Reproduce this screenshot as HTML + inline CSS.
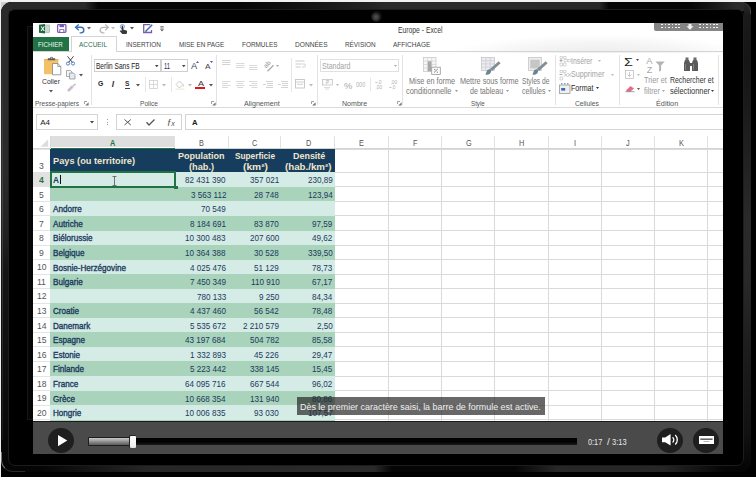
<!DOCTYPE html><html><head><meta charset="utf-8"><style>
*{margin:0;padding:0;box-sizing:border-box}
html,body{width:756px;height:477px;overflow:hidden;background:#000;position:relative;font-family:"Liberation Sans",sans-serif}
.a{position:absolute}
.t{position:absolute;white-space:nowrap;line-height:1;transform-origin:0 0}
svg{position:absolute;overflow:visible}
</style></head><body>
<div class="a" style="left:0;top:0;width:756px;height:2px;background:#f2f2f2"></div>
<div class="a" style="left:0;top:0;width:1px;height:477px;background:#eeeeee"></div>
<div class="a" style="left:1px;top:2px;width:8px;height:10px;background:#d0d0d0"></div>
<div class="a" style="left:1px;top:2px;width:750px;height:470px;border-radius:11px;overflow:hidden;background:#050505">
<div class="a" style="left:0;top:0;width:750px;height:9px;background:linear-gradient(to right,#2b2b2b 0px,#292929 84px,#060606 97px,#060606 240px,#151515 310px,#242424 370px,#2a2a2a 385px,#292929 598px,#060606 608px,#060606 690px,#1e1e1e 722px,#2a2a2a 735px)"></div>
<div class="a" style="left:0;top:0;width:8px;height:470px;background:linear-gradient(to bottom,#2b2b2b 0px,#2a2a2a 168px,#222 228px,#141414 270px,#0c0c0c 400px,#050505 460px)"></div>
<div class="a" style="left:743px;top:0;width:8px;height:470px;background:linear-gradient(to bottom,#2a2a2a 0px,#1a1a1a 14px,#151515 60px,#202020 150px,#2a2a2a 220px,#282828 280px,#1c1c1c 350px,#121212 430px,#050505 465px)"></div>
<div class="a" style="left:39px;top:463.5px;width:352px;height:6.5px;background:linear-gradient(to right,rgba(40,40,40,0),#262626 30%,#2a2a2a 95%,rgba(42,42,42,0))"></div>
<div class="a" style="left:514px;top:463.5px;width:210px;height:6.5px;background:linear-gradient(to right,rgba(40,40,40,0),#272727 20%,#262626 70%,rgba(38,38,38,0))"></div>
</div>
<div class="a" style="left:2px;top:40px;width:1px;height:400px;background:linear-gradient(to bottom,#2e2e2e,#444 40%,#1a1a1a)"></div>
<div class="a" style="left:8px;top:8.7px;width:736px;height:457px;border-radius:7px;background:#000;border:1px solid #1c1c1c"></div>
<div class="a" style="left:1px;top:452px;width:24px;height:20px;border-bottom-left-radius:12px;border-left:1px solid #777;border-bottom:1px solid #2a2a2a"></div>
<div class="a" style="left:371px;top:11px;width:11px;height:11px;border-radius:50%;background:radial-gradient(circle at 45% 55%,#555 0,#333 35%,#0a0a0a 60%,#1c1c1c 80%,#000 100%)"></div>
<div class="a" style="left:27px;top:26px;width:6px;height:393.5px;background:#060608;border:0.6px solid #161616;border-right:none"></div>
<div class="a" style="left:741px;top:2px;width:10px;height:12px;border-top-right-radius:9px;border-top:1px solid #3a3a3a;border-right:1px solid #444"></div>
<div class="a" style="left:33px;top:23px;width:690px;height:431px;background:#fff;overflow:hidden">
<div class="a" style="left:380.00px;top:0.00px;width:310.00px;height:30.00px;background:radial-gradient(ellipse 60% 90% at 60% 110%,#ebebeb 0,#f4f4f4 45%,#fff 80%)"></div>
<div class="t" style="left:364.80px;top:2.52px;font-size:8.6px;color:#3a3a3a;font-weight:400;;transform:scaleX(0.7894)">Europe - Excel</div>
<div class="a" style="left:621.30px;top:0.00px;width:69.00px;height:7.50px;background:#858585;border-bottom-left-radius:2px"></div>
<div class="a" style="left:628.20px;top:0.50px;width:1.70px;height:1.70px;background:#f4f4f4"></div>
<div class="a" style="left:631.65px;top:0.50px;width:1.70px;height:1.70px;background:#f4f4f4"></div>
<div class="a" style="left:635.10px;top:0.50px;width:1.70px;height:1.70px;background:#f4f4f4"></div>
<div class="a" style="left:638.55px;top:0.50px;width:1.70px;height:1.70px;background:#f4f4f4"></div>
<div class="a" style="left:642.00px;top:0.50px;width:1.70px;height:1.70px;background:#f4f4f4"></div>
<div class="a" style="left:645.45px;top:0.50px;width:1.70px;height:1.70px;background:#f4f4f4"></div>
<div class="a" style="left:666.20px;top:0.50px;width:1.70px;height:1.70px;background:#f4f4f4"></div>
<div class="a" style="left:669.65px;top:0.50px;width:1.70px;height:1.70px;background:#f4f4f4"></div>
<div class="a" style="left:673.10px;top:0.50px;width:1.70px;height:1.70px;background:#f4f4f4"></div>
<div class="a" style="left:676.55px;top:0.50px;width:1.70px;height:1.70px;background:#f4f4f4"></div>
<div class="a" style="left:680.00px;top:0.50px;width:1.70px;height:1.70px;background:#f4f4f4"></div>
<div class="a" style="left:683.45px;top:0.50px;width:1.70px;height:1.70px;background:#f4f4f4"></div>
<div class="a" style="left:628.20px;top:3.60px;width:1.70px;height:1.70px;background:#f4f4f4"></div>
<div class="a" style="left:631.65px;top:3.60px;width:1.70px;height:1.70px;background:#f4f4f4"></div>
<div class="a" style="left:635.10px;top:3.60px;width:1.70px;height:1.70px;background:#f4f4f4"></div>
<div class="a" style="left:638.55px;top:3.60px;width:1.70px;height:1.70px;background:#f4f4f4"></div>
<div class="a" style="left:642.00px;top:3.60px;width:1.70px;height:1.70px;background:#f4f4f4"></div>
<div class="a" style="left:645.45px;top:3.60px;width:1.70px;height:1.70px;background:#f4f4f4"></div>
<div class="a" style="left:666.20px;top:3.60px;width:1.70px;height:1.70px;background:#f4f4f4"></div>
<div class="a" style="left:669.65px;top:3.60px;width:1.70px;height:1.70px;background:#f4f4f4"></div>
<div class="a" style="left:673.10px;top:3.60px;width:1.70px;height:1.70px;background:#f4f4f4"></div>
<div class="a" style="left:676.55px;top:3.60px;width:1.70px;height:1.70px;background:#f4f4f4"></div>
<div class="a" style="left:680.00px;top:3.60px;width:1.70px;height:1.70px;background:#f4f4f4"></div>
<div class="a" style="left:683.45px;top:3.60px;width:1.70px;height:1.70px;background:#f4f4f4"></div>
<svg style="left:653.00px;top:0.00px;" width="8" height="8" viewBox="0 0 8 8"><path d="M2.5 1h3v2.2h2L4 6.8 0.5 3.2h2z" fill="#f2f2f2"/></svg>
<svg style="left:6.00px;top:0.70px;" width="11" height="9.5" viewBox="0 0 11 9.5"><rect x="4.5" y="1" width="6" height="7.5" fill="#c9d9cf" stroke="#8fb19c" stroke-width="0.6"/><path d="M0 0.8 6 0v9.5L0 8.7z" fill="#1d6c40"/><path d="M1.6 2.6h1.2l0.9 1.5 0.9-1.5h1.2L4.3 4.8l1.5 2.3H4.6l-0.9-1.5-0.9 1.5H1.6l1.5-2.3z" fill="#fff"/></svg>
<svg style="left:24.00px;top:1.00px;" width="9.5" height="9" viewBox="0 0 9.5 9"><rect x="0.6" y="0.6" width="8.3" height="7.8" rx="0.8" fill="none" stroke="#7a5cb4" stroke-width="1.3"/><rect x="2.5" y="0.6" width="4.5" height="2.6" fill="#7a5cb4"/><rect x="2.3" y="5.2" width="5" height="3.2" fill="#7a5cb4"/><rect x="3.3" y="6" width="3" height="2" fill="#fff"/></svg>
<svg style="left:41.50px;top:1.00px;" width="10" height="9" viewBox="0 0 10 9"><path d="M1.2 3.3h4.8a2.8 2.8 0 0 1 0 5.6H4.6" fill="none" stroke="#3b6db3" stroke-width="1.4"/><path d="M3.8 0.4 0.6 3.3l3.2 2.9" fill="none" stroke="#3b6db3" stroke-width="1.4"/></svg>
<svg style="left:53.50px;top:4.00px;" width="4" height="3" viewBox="0 0 4 3"><path d="M0 0h4L2 2.5z" fill="#666"/></svg>
<svg style="left:65.50px;top:1.00px;" width="10" height="9" viewBox="0 0 10 9"><path d="M8.8 3.3H4a2.8 2.8 0 0 0 0 5.6h1.4" fill="none" stroke="#b9b9b9" stroke-width="1.3"/><path d="M6.2 0.4l3.2 2.9-3.2 2.9" fill="none" stroke="#b9b9b9" stroke-width="1.3"/></svg>
<svg style="left:78.00px;top:4.00px;" width="4" height="3" viewBox="0 0 4 3"><path d="M0 0h4L2 2.5z" fill="#bbb"/></svg>
<svg style="left:86.00px;top:0.50px;" width="9" height="10" viewBox="0 0 9 10"><circle cx="3.4" cy="2.6" r="2.1" fill="none" stroke="#5a8fd0" stroke-width="0.8"/><path d="M2.6 2.4a0.8 0.8 0 0 1 1.6 0v3.2l3.2 0.9c0.6 0.2 0.8 0.6 0.7 1.2L7.6 10H3.3L0.9 7.3c-0.3-0.4 0-1 0.6-0.9l1.1 0.4z" fill="#3a3a3a"/></svg>
<svg style="left:97.00px;top:4.00px;" width="4" height="3" viewBox="0 0 4 3"><path d="M0 0h4L2 2.5z" fill="#555"/></svg>
<svg style="left:110.00px;top:1.00px;" width="10" height="9.5" viewBox="0 0 10 9.5"><path d="M7.3 0.7H0.7v7.8h7.8V6" fill="none" stroke="#7a5cb4" stroke-width="1.3"/><path d="M3 7 9.2 0.8" stroke="#3f6fb8" stroke-width="1.5"/><path d="M2.2 7.9l0.6-1.6 1 1z" fill="#333"/></svg>
<svg style="left:126.50px;top:3.00px;" width="4" height="6" viewBox="0 0 4 6"><path d="M0.3 0.6h3.4M0.3 2h3.4" stroke="#666" stroke-width="0.8"/><path d="M0 3.3h4L2 5.5z" fill="#666"/></svg>
<div class="a" style="left:0.00px;top:13.80px;width:36.00px;height:14.80px;background:#217346"></div>
<div class="a" style="left:38.30px;top:13.20px;width:45.30px;height:16.00px;background:#fff;border:1px solid #d4d4d4;border-bottom:none"></div>
<div class="a" style="left:0.00px;top:28.40px;width:38.30px;height:1.00px;background:#d4d4d4"></div>
<div class="a" style="left:83.60px;top:28.40px;width:606.40px;height:1.00px;background:#d4d4d4"></div>
<div class="t" style="left:5.20px;top:18.33px;font-size:8.0px;color:#f3f7f5;font-weight:400;;transform:scaleX(0.7750)">FICHIER</div>
<div class="t" style="left:46.20px;top:18.33px;font-size:8.0px;color:#2f6e56;font-weight:400;;transform:scaleX(0.8072)">ACCUEIL</div>
<div class="t" style="left:92.60px;top:18.33px;font-size:8.0px;color:#444;font-weight:400;;transform:scaleX(0.8037)">INSERTION</div>
<div class="t" style="left:145.70px;top:18.33px;font-size:8.0px;color:#444;font-weight:400;;transform:scaleX(0.7980)">MISE EN PAGE</div>
<div class="t" style="left:209.00px;top:18.33px;font-size:8.0px;color:#444;font-weight:400;;transform:scaleX(0.8008)">FORMULES</div>
<div class="t" style="left:262.30px;top:18.33px;font-size:8.0px;color:#444;font-weight:400;;transform:scaleX(0.8240)">DONNÉES</div>
<div class="t" style="left:311.50px;top:18.33px;font-size:8.0px;color:#444;font-weight:400;;transform:scaleX(0.7977)">RÉVISION</div>
<div class="t" style="left:359.70px;top:18.33px;font-size:8.0px;color:#444;font-weight:400;;transform:scaleX(0.8147)">AFFICHAGE</div>
<div class="a" style="left:0.00px;top:84.00px;width:690.00px;height:1.00px;background:#dadada"></div>
<div class="a" style="left:58.30px;top:32.00px;width:1.00px;height:50.00px;background:#e3e3e3"></div>
<div class="a" style="left:182.80px;top:32.00px;width:1.00px;height:50.00px;background:#e3e3e3"></div>
<div class="a" style="left:284.00px;top:32.00px;width:1.00px;height:50.00px;background:#e3e3e3"></div>
<div class="a" style="left:368.80px;top:32.00px;width:1.00px;height:50.00px;background:#e3e3e3"></div>
<div class="a" style="left:521.50px;top:32.00px;width:1.00px;height:50.00px;background:#e3e3e3"></div>
<div class="a" style="left:586.00px;top:32.00px;width:1.00px;height:50.00px;background:#e3e3e3"></div>
<div class="a" style="left:684.80px;top:32.00px;width:1.00px;height:50.00px;background:#e3e3e3"></div>
<div class="t" style="left:2.10px;top:76.64px;font-size:7.4px;color:#555;font-weight:400;;transform:scaleX(0.8853)">Presse-papiers</div>
<div class="t" style="left:107.30px;top:76.64px;font-size:7.4px;color:#555;font-weight:400;;transform:scaleX(0.8937)">Police</div>
<div class="t" style="left:211.40px;top:76.64px;font-size:7.4px;color:#555;font-weight:400;;transform:scaleX(0.9653)">Alignement</div>
<div class="t" style="left:309.30px;top:76.64px;font-size:7.4px;color:#555;font-weight:400;;transform:scaleX(0.9545)">Nombre</div>
<div class="t" style="left:437.90px;top:76.64px;font-size:7.4px;color:#555;font-weight:400;;transform:scaleX(0.8395)">Style</div>
<div class="t" style="left:541.50px;top:76.64px;font-size:7.4px;color:#555;font-weight:400;;transform:scaleX(0.9051)">Cellules</div>
<div class="t" style="left:623.40px;top:76.64px;font-size:7.4px;color:#555;font-weight:400;;transform:scaleX(0.9819)">Édition</div>
<svg style="left:51.40px;top:78.20px;" width="5" height="5" viewBox="0 0 5 5"><path d="M0.5 0.5h2.5M0.5 0.5v2.5" stroke="#888" stroke-width="0.8" fill="none"/><path d="M4.6 1.2v3.4H1.2z" fill="#777"/></svg>
<svg style="left:177.50px;top:78.20px;" width="5" height="5" viewBox="0 0 5 5"><path d="M0.5 0.5h2.5M0.5 0.5v2.5" stroke="#888" stroke-width="0.8" fill="none"/><path d="M4.6 1.2v3.4H1.2z" fill="#777"/></svg>
<svg style="left:278.00px;top:78.20px;" width="5" height="5" viewBox="0 0 5 5"><path d="M0.5 0.5h2.5M0.5 0.5v2.5" stroke="#888" stroke-width="0.8" fill="none"/><path d="M4.6 1.2v3.4H1.2z" fill="#777"/></svg>
<svg style="left:364.00px;top:78.20px;" width="5" height="5" viewBox="0 0 5 5"><path d="M0.5 0.5h2.5M0.5 0.5v2.5" stroke="#888" stroke-width="0.8" fill="none"/><path d="M4.6 1.2v3.4H1.2z" fill="#777"/></svg>
<svg style="left:11.00px;top:32.50px;" width="18" height="20" viewBox="0 0 18 20"><rect x="0" y="3" width="14.3" height="15.2" fill="#f3c168"/><rect x="0" y="3" width="14.3" height="1.2" fill="#e8b050"/><path d="M3.8 4.2V2.2h2.2a1.5 1.5 0 0 1 3 0h2.2v2z" fill="#5d5d5d"/><circle cx="7.5" cy="2" r="0.6" fill="#fff"/><path d="M8.5 7.5h5.3l3 3v8.3H8.5z" fill="#fff" stroke="#7a7a7a" stroke-width="0.7"/><path d="M13.8 7.5v3h3" fill="none" stroke="#7a7a7a" stroke-width="0.7"/></svg>
<div class="t" style="left:9.20px;top:55.11px;font-size:7.9px;color:#333;font-weight:400;;transform:scaleX(0.8734)">Coller</div>
<svg style="left:16.30px;top:67.00px;" width="4" height="3" viewBox="0 0 4 3"><path d="M0 0h4L2 2.5z" fill="#555"/></svg>
<svg style="left:33.00px;top:32.50px;" width="9" height="9.5" viewBox="0 0 9 9.5"><path d="M1.5 0.3 6.5 6.5M7.5 0.3 2.5 6.5" stroke="#333" stroke-width="0.9"/><circle cx="2" cy="7.5" r="1.6" fill="none" stroke="#3f78c0" stroke-width="0.9"/><circle cx="7" cy="7.5" r="1.6" fill="none" stroke="#3f78c0" stroke-width="0.9"/></svg>
<svg style="left:33.00px;top:47.00px;" width="10" height="9.5" viewBox="0 0 10 9.5"><path d="M0.5 0.5h4l1.5 1.5v4.5H0.5z" fill="#f4f4f4" stroke="#8a8a8a" stroke-width="0.7"/><path d="M3.5 3h4l1.5 1.5v4.5H3.5z" fill="#e4e8f0" stroke="#8a8a8a" stroke-width="0.7"/></svg>
<svg style="left:46.00px;top:50.50px;" width="4" height="3" viewBox="0 0 4 3"><path d="M0 0h4L2 2.5z" fill="#555"/></svg>
<svg style="left:34.00px;top:60.50px;" width="10" height="8" viewBox="0 0 10 8"><path d="M1 7 5.5 2.5" stroke="#c8b8d8" stroke-width="2.5"/><path d="M5.5 2.5 8.5 0" stroke="#bbb" stroke-width="1.5"/><path d="M2 7.5 6 3.5" stroke="#e8d2b0" stroke-width="1"/></svg>
<div class="a" style="left:61.30px;top:35.60px;width:67.10px;height:13.80px;background:#fff;border:1px solid #cfcfcf"></div>
<div class="a" style="left:128.10px;top:35.60px;width:26.60px;height:13.80px;background:#fff;border:1px solid #cfcfcf"></div>
<div class="t" style="left:63.20px;top:39.22px;font-size:8.6px;color:#222;font-weight:400;;transform:scaleX(0.7623)">Berlin Sans FB</div>
<svg style="left:122.00px;top:41.80px;" width="3.5" height="2.5" viewBox="0 0 3.5 2.5"><path d="M0 0h3.5L1.75 2.2z" fill="#444"/></svg>
<div class="t" style="left:131.00px;top:39.22px;font-size:8.6px;color:#2a2a5a;font-weight:400;;transform:scaleX(0.6725)">11</div>
<svg style="left:149.00px;top:41.80px;" width="3.5" height="2.5" viewBox="0 0 3.5 2.5"><path d="M0 0h3.5L1.75 2.2z" fill="#444"/></svg>
<div class="t" style="left:157.80px;top:39.28px;font-size:9px;color:#444;font-weight:400;;transform:scaleX(1.0306)">A</div>
<svg style="left:163.20px;top:37.80px;" width="3" height="2" viewBox="0 0 3 2"><path d="M0 2 1.5 0 3 2z" fill="#4a5aa0"/></svg>
<div class="t" style="left:172.00px;top:40.23px;font-size:8px;color:#444;font-weight:400;;transform:scaleX(1.0292)">A</div>
<svg style="left:176.80px;top:37.80px;" width="3" height="2" viewBox="0 0 3 2"><path d="M0 0h3L1.5 2z" fill="#4a5aa0"/></svg>
<div class="t" style="left:65.20px;top:57.43px;font-size:8px;color:#222;font-weight:700;;transform:scaleX(0.8501)">G</div>
<div class="t" style="left:78.80px;top:57.29px;font-size:8.4px;color:#333;font-weight:700;font-style:italic;font-family:"Liberation Serif",serif;transform:scaleX(1.3780)">I</div>
<div class="t" style="left:92.40px;top:57.40px;font-size:7.8px;color:#333;font-weight:700;;transform:scaleX(0.8456)">S</div>
<div class="a" style="left:92.00px;top:64.60px;width:5.30px;height:0.90px;background:#444"></div>
<svg style="left:102.50px;top:60.50px;" width="4" height="3" viewBox="0 0 4 3"><path d="M0 0h4L2 2.5z" fill="#555"/></svg>
<div class="a" style="left:112.00px;top:54.00px;width:1.00px;height:15.00px;background:#e6e6e6"></div>
<svg style="left:116.00px;top:57.00px;" width="9" height="9" viewBox="0 0 9 9"><rect x="0.5" y="0.5" width="8" height="8" fill="none" stroke="#cfcfcf" stroke-width="0.8"/><path d="M4.5 0.5v8M0.5 4.5h8" stroke="#cfcfcf" stroke-width="0.8"/></svg>
<svg style="left:129.00px;top:60.50px;" width="4" height="3" viewBox="0 0 4 3"><path d="M0 0h4L2 2.5z" fill="#bbb"/></svg>
<div class="a" style="left:137.50px;top:54.00px;width:1.00px;height:15.00px;background:#e6e6e6"></div>
<svg style="left:142.00px;top:56.50px;" width="10" height="9.5" viewBox="0 0 10 9.5"><path d="M1 4.5 4.5 1 8 4.5 4.5 8z" fill="none" stroke="#c4c4c4" stroke-width="0.9"/><path d="M8 4.5c0.5 1 1 1.6 0.6 2.2" stroke="#d0c0a0" stroke-width="0.8" fill="none"/><rect x="0.5" y="8.6" width="9" height="1" fill="#ece7d2"/></svg>
<svg style="left:155.00px;top:60.50px;" width="4" height="3" viewBox="0 0 4 3"><path d="M0 0h4L2 2.5z" fill="#bbb"/></svg>
<div class="t" style="left:164.60px;top:57.03px;font-size:8px;color:#333;font-weight:400;;transform:scaleX(1.1228)">A</div>
<div class="a" style="left:162.30px;top:63.60px;width:9.80px;height:2.20px;background:#e0161b"></div>
<svg style="left:175.50px;top:60.50px;" width="4" height="3" viewBox="0 0 4 3"><path d="M0 0h4L2 2.5z" fill="#555"/></svg>
<svg style="left:189.00px;top:37.00px;" width="12" height="10" viewBox="0 0 12 10"><rect x="0" y="0" width="8.5" height="0.9" fill="#d0d0d0"/><rect x="0" y="2" width="8.5" height="0.9" fill="#d0d0d0"/><rect x="0" y="4" width="8.5" height="0.9" fill="#d0d0d0"/></svg>
<svg style="left:202.50px;top:39.50px;" width="12" height="10" viewBox="0 0 12 10"><rect x="0" y="0" width="8.5" height="0.9" fill="#d6d6d6"/><rect x="0" y="2" width="8.5" height="0.9" fill="#d6d6d6"/><rect x="0" y="4" width="8.5" height="0.9" fill="#d6d6d6"/></svg>
<svg style="left:216.00px;top:42.00px;" width="12" height="10" viewBox="0 0 12 10"><rect x="0" y="0" width="8.5" height="0.9" fill="#d6d6d6"/><rect x="0" y="2" width="8.5" height="0.9" fill="#d6d6d6"/><rect x="0" y="4" width="8.5" height="0.9" fill="#d6d6d6"/></svg>
<svg style="left:229.00px;top:36.00px;" width="14" height="13" viewBox="0 0 14 13"><g transform="rotate(-45 5 5)"><text x="1" y="7.5" font-size="6.5" font-weight="700" fill="#b0b0b0" font-family="Liberation Sans">ab</text></g><path d="M5.5 12.2 11.5 6.3" stroke="#a8a8a8" stroke-width="1.2"/></svg>
<svg style="left:242.50px;top:41.50px;" width="3" height="2" viewBox="0 0 3 2"><path d="M0 0h3L1.5 2z" fill="#aaa"/></svg>
<svg style="left:189.00px;top:57.50px;" width="12" height="10" viewBox="0 0 12 10"><rect x="0" y="0" width="8.5" height="0.9" fill="#d6d6d6"/><rect x="0" y="2" width="6" height="0.9" fill="#d6d6d6"/><rect x="0" y="4" width="8.5" height="0.9" fill="#d6d6d6"/><rect x="0" y="6" width="6" height="0.9" fill="#d6d6d6"/></svg>
<svg style="left:202.50px;top:57.50px;" width="12" height="10" viewBox="0 0 12 10"><rect x="0" y="0" width="8.5" height="0.9" fill="#d6d6d6"/><rect x="1.2" y="2" width="6" height="0.9" fill="#d6d6d6"/><rect x="0" y="4" width="8.5" height="0.9" fill="#d6d6d6"/><rect x="1.2" y="6" width="6" height="0.9" fill="#d6d6d6"/></svg>
<svg style="left:216.00px;top:57.50px;" width="12" height="10" viewBox="0 0 12 10"><rect x="0" y="0" width="8.5" height="0.9" fill="#d6d6d6"/><rect x="2.5" y="2" width="6" height="0.9" fill="#d6d6d6"/><rect x="0" y="4" width="8.5" height="0.9" fill="#d6d6d6"/><rect x="2.5" y="6" width="6" height="0.9" fill="#d6d6d6"/></svg>
<svg style="left:230.00px;top:57.50px;" width="12" height="10" viewBox="0 0 12 10"><rect x="3" y="0" width="7" height="0.9" fill="#d0d0d0"/><rect x="4" y="2" width="6" height="0.9" fill="#d0d0d0"/><rect x="4" y="4" width="6" height="0.9" fill="#d0d0d0"/><rect x="3" y="6" width="7" height="0.9" fill="#d0d0d0"/><rect x="0" y="3" width="3" height="0.9" fill="#d0d0d0"/></svg>
<svg style="left:245.00px;top:57.50px;" width="12" height="10" viewBox="0 0 12 10"><rect x="3" y="0" width="7" height="0.9" fill="#d0d0d0"/><rect x="4" y="2" width="6" height="0.9" fill="#d0d0d0"/><rect x="4" y="4" width="6" height="0.9" fill="#d0d0d0"/><rect x="3" y="6" width="7" height="0.9" fill="#d0d0d0"/><rect x="0" y="3" width="3" height="0.9" fill="#d0d0d0"/></svg>
<div class="a" style="left:257.50px;top:35.00px;width:1.00px;height:34.00px;background:#e6e6e6"></div>
<svg style="left:262.00px;top:37.00px;" width="11" height="10" viewBox="0 0 11 10"><path d="M0.5 1h9M0.5 4h6M0.5 7h5" stroke="#c4c4c4" stroke-width="0.9"/><path d="M7 4h2a1.5 1.5 0 0 1 0 3H7" fill="none" stroke="#c4c4c4" stroke-width="0.8"/></svg>
<svg style="left:262.00px;top:56.00px;" width="11" height="10" viewBox="0 0 11 10"><rect x="0.5" y="0.5" width="9" height="8.5" fill="none" stroke="#c4c4c4" stroke-width="0.9"/><path d="M0.5 3h9M2 5.3h6" stroke="#c4c4c4" stroke-width="0.8"/></svg>
<svg style="left:275.50px;top:60.50px;" width="4" height="3" viewBox="0 0 4 3"><path d="M0 0h4L2 2.5z" fill="#bbb"/></svg>
<div class="a" style="left:286.80px;top:35.80px;width:79.40px;height:13.20px;background:#fff;border:1px solid #e0e0e0"></div>
<div class="t" style="left:289.30px;top:39.12px;font-size:8.6px;color:#a4a4a4;font-weight:400;;transform:scaleX(0.8168)">Standard</div>
<svg style="left:360.50px;top:42.00px;" width="3" height="2" viewBox="0 0 3 2"><path d="M0 0h3L1.5 2z" fill="#aaa"/></svg>
<svg style="left:288.50px;top:56.00px;" width="12" height="11" viewBox="0 0 12 11"><rect x="0.5" y="0.5" width="10" height="5.5" fill="#fafafa" stroke="#bdbdbd" stroke-width="0.7"/><text x="4" y="5" font-size="4.5" fill="#aaa" font-family="Liberation Sans">P</text><path d="M2 8.5h6M3 10h4" stroke="#ccc" stroke-width="0.7"/></svg>
<svg style="left:303.00px;top:60.50px;" width="3" height="2" viewBox="0 0 3 2"><path d="M0 0h3L1.5 2z" fill="#bbb"/></svg>
<div class="t" style="left:310.50px;top:57.67px;font-size:9.6px;color:#a8a8a8;font-weight:400;;transform:scaleX(0.9729)">%</div>
<div class="t" style="left:323.20px;top:58.47px;font-size:7px;color:#b0b0b0;font-weight:400;;transform:scaleX(0.7872)">000</div>
<div class="a" style="left:337.00px;top:55.00px;width:1.00px;height:13.00px;background:#e6e6e6"></div>
<svg style="left:341.50px;top:56.50px;" width="12" height="10" viewBox="0 0 12 10"><text x="2.5" y="4.2" font-size="4.8" fill="#b0b0b0" font-family="Liberation Sans">,0</text><text x="0.5" y="9.2" font-size="4.8" fill="#b0b0b0" font-family="Liberation Sans">,00</text><path d="M0.3 2.5h2.2" stroke="#8aa0c0" stroke-width="0.6"/></svg>
<svg style="left:355.50px;top:56.50px;" width="12" height="10" viewBox="0 0 12 10"><text x="1.5" y="4.2" font-size="4.8" fill="#b0b0b0" font-family="Liberation Sans">,00</text><text x="2.5" y="9.2" font-size="4.8" fill="#b0b0b0" font-family="Liberation Sans">,0</text><path d="M0.3 7.5h2.2" stroke="#8aa0c0" stroke-width="0.6"/></svg>
<svg style="left:389.50px;top:33.50px;" width="19" height="18" viewBox="0 0 19 18"><rect x="0.5" y="0.5" width="12.5" height="14" fill="#f6f6f6" stroke="#c4c4c4" stroke-width="0.7"/><path d="M0.5 4h12.5M0.5 7.5h12.5M0.5 11h12.5M4.5 0.5v14M8.7 0.5v14" stroke="#cfcfcf" stroke-width="0.6"/><rect x="4.8" y="4.3" width="3.7" height="10" fill="#a8a8a8"/><rect x="8.7" y="10.2" width="8.6" height="7.3" fill="#fbfbfb" stroke="#9a9a9a" stroke-width="0.8"/><path d="M11 15.5l3.8-3.5M11.2 12.5h1.2M13.8 15.2h1.2" stroke="#555" stroke-width="0.7"/></svg>
<svg style="left:448.00px;top:33.50px;" width="20" height="18.5" viewBox="0 0 20 18.5"><rect x="0.5" y="0.5" width="13" height="13" fill="#ecebf2" stroke="#c0c0c0" stroke-width="0.7"/><path d="M0.5 3.7h13M0.5 6.9h13M0.5 10.1h13M4.8 0.5v13M9.2 0.5v13" stroke="#c6c6ce" stroke-width="0.6"/><path d="M17.6 4.3 19.6 6.3 11 14 8.9 12z" fill="#7f8f98"/><path d="M9.6 12.6c-1.4-0.8-3 0-3.8 1.5L4.5 17.8c1.8 0.2 3.6-0.5 4.8-1.6 1-0.9 1-2.4 0.3-3.6z" fill="#6d8190"/></svg>
<svg style="left:495.00px;top:33.50px;" width="20" height="18.5" viewBox="0 0 20 18.5"><rect x="0.5" y="0.5" width="13" height="13" fill="#ececec" stroke="#c0c0c0" stroke-width="0.7"/><rect x="2.3" y="2.8" width="9.4" height="8.6" fill="#c6c6c6"/><path d="M17.6 4.3 19.6 6.3 11 14 8.9 12z" fill="#7f8f98"/><path d="M9.6 12.6c-1.4-0.8-3 0-3.8 1.5L4.5 17.8c1.8 0.2 3.6-0.5 4.8-1.6 1-0.9 1-2.4 0.3-3.6z" fill="#6d8190"/></svg>
<div class="t" style="left:375.50px;top:54.96px;font-size:8.2px;color:#777;font-weight:400;;transform:scaleX(0.8887)">Mise en forme</div>
<div class="t" style="left:373.30px;top:65.06px;font-size:8.2px;color:#777;font-weight:400;;transform:scaleX(0.9086)">conditionnelle</div>
<svg style="left:421.50px;top:66.50px;" width="3" height="2" viewBox="0 0 3 2"><path d="M0 0h3L1.5 2z" fill="#999"/></svg>
<div class="t" style="left:426.90px;top:54.96px;font-size:8.2px;color:#777;font-weight:400;;transform:scaleX(0.8881)">Mettre sous forme</div>
<div class="t" style="left:436.80px;top:65.06px;font-size:8.2px;color:#777;font-weight:400;;transform:scaleX(0.8680)">de tableau</div>
<svg style="left:472.50px;top:66.50px;" width="3" height="2" viewBox="0 0 3 2"><path d="M0 0h3L1.5 2z" fill="#999"/></svg>
<div class="t" style="left:489.30px;top:54.96px;font-size:8.2px;color:#777;font-weight:400;;transform:scaleX(0.8163)">Styles de</div>
<div class="t" style="left:489.30px;top:65.06px;font-size:8.2px;color:#777;font-weight:400;;transform:scaleX(0.8604)">cellules</div>
<svg style="left:515.00px;top:66.50px;" width="3" height="2" viewBox="0 0 3 2"><path d="M0 0h3L1.5 2z" fill="#999"/></svg>
<svg style="left:525.50px;top:32.50px;" width="13" height="11" viewBox="0 0 13 11"><path d="M1 0.5h2.5v2H1zM4.5 0.5H7v2H4.5z" fill="none" stroke="#bdbdbd" stroke-width="0.6"/><path d="M0.5 4.5h3M2 3v3" stroke="#999" stroke-width="0.8"/><path d="M5 3.5h3.5v2.2H5zM9 3.5h3v2.2H9zM1 7h2.5v3H1zM4.5 7H7v3H4.5z" fill="none" stroke="#bdbdbd" stroke-width="0.6"/></svg>
<div class="t" style="left:538.00px;top:33.69px;font-size:8.4px;color:#a4a4a4;font-weight:400;;transform:scaleX(0.8206)">Insérer</div>
<svg style="left:564.50px;top:36.50px;" width="3" height="2" viewBox="0 0 3 2"><path d="M0 0h3L1.5 2z" fill="#bbb"/></svg>
<svg style="left:525.50px;top:46.50px;" width="13" height="11" viewBox="0 0 13 11"><path d="M1 0.5h2.5v2H1zM4.5 0.5H7v2H4.5z" fill="none" stroke="#bdbdbd" stroke-width="0.6"/><path d="M0.5 4.5h3" stroke="#999" stroke-width="0.8"/><path d="M5 3.2l3.5 3.5M8.5 3.2 5 6.7M9 3.2l3 3.5M12 3.2 9 6.7" stroke="#aaa" stroke-width="0.7"/><path d="M1 7h2.5v3H1z" fill="none" stroke="#bdbdbd" stroke-width="0.6"/></svg>
<div class="t" style="left:538.00px;top:47.49px;font-size:8.4px;color:#a4a4a4;font-weight:400;;transform:scaleX(0.8618)">Supprimer</div>
<svg style="left:577.50px;top:50.50px;" width="3" height="2" viewBox="0 0 3 2"><path d="M0 0h3L1.5 2z" fill="#bbb"/></svg>
<svg style="left:525.50px;top:60.00px;" width="12" height="11" viewBox="0 0 12 11"><rect x="0.5" y="2" width="10.5" height="8.5" fill="#f0f0f0" stroke="#8a8a8a" stroke-width="0.7"/><path d="M2 0.8h1.5M5 0.8h1.5M8 0.8h1.5" stroke="#4a7ac0" stroke-width="1"/><rect x="2.2" y="5" width="4" height="2.6" fill="#3a6ab0"/></svg>
<div class="t" style="left:538.00px;top:61.09px;font-size:8.4px;color:#2a2a2a;font-weight:400;;transform:scaleX(0.8481)">Format</div>
<svg style="left:563.00px;top:63.50px;" width="3" height="2" viewBox="0 0 3 2"><path d="M0 0h3L1.5 2z" fill="#333"/></svg>
<div class="t" style="left:590.50px;top:33.61px;font-size:10.5px;color:#222;font-weight:400;;transform:scaleX(1.3692)">Σ</div>
<svg style="left:603.00px;top:36.00px;" width="3" height="2" viewBox="0 0 3 2"><path d="M0 0h3L1.5 2z" fill="#444"/></svg>
<svg style="left:592.00px;top:46.50px;" width="9" height="9" viewBox="0 0 9 9"><rect x="0.5" y="0.5" width="8" height="8" fill="none" stroke="#c0c0c0" stroke-width="0.8"/><path d="M4.5 2v4.5M2.5 4.5l2 2 2-2" stroke="#bbb" stroke-width="0.8" fill="none"/></svg>
<svg style="left:604.00px;top:50.50px;" width="3" height="2" viewBox="0 0 3 2"><path d="M0 0h3L1.5 2z" fill="#bbb"/></svg>
<svg style="left:591.50px;top:61.00px;" width="11" height="8" viewBox="0 0 11 8"><path d="M1 6.5 5.5 2 9 4.5 5.5 7.5H2z" fill="#e86a8a"/><path d="M0.5 7.7h9" stroke="#777" stroke-width="0.7"/></svg>
<svg style="left:604.00px;top:64.50px;" width="3" height="2" viewBox="0 0 3 2"><path d="M0 0h3L1.5 2z" fill="#555"/></svg>
<svg style="left:612.50px;top:34.00px;" width="20" height="17" viewBox="0 0 20 17"><text x="0.3" y="7.4" font-size="9.4" fill="#a8a8a8" font-family="Liberation Sans">A</text><text x="0.8" y="15.6" font-size="9" fill="#a8a8a8" font-family="Liberation Sans">Z</text><path d="M9.5 4.4h9.2l-3.6 4.2v5l-2 1.2V8.6z" fill="#b4b4b4"/></svg>
<div class="t" style="left:611.00px;top:53.96px;font-size:8.2px;color:#999;font-weight:400;;transform:scaleX(0.8853)">Trier et</div>
<div class="t" style="left:611.00px;top:65.06px;font-size:8.2px;color:#999;font-weight:400;;transform:scaleX(0.8790)">filtrer</div>
<svg style="left:629.00px;top:66.50px;" width="3" height="2" viewBox="0 0 3 2"><path d="M0 0h3L1.5 2z" fill="#aaa"/></svg>
<svg style="left:650.00px;top:33.50px;" width="17" height="15" viewBox="0 0 17 15"><path d="M2 3h4l1 3v8H1V6z" fill="#5a5a5a"/><path d="M10 3h4l1 3v8H9V6z" fill="#5a5a5a"/><rect x="6" y="6" width="4" height="3" fill="#5a5a5a"/><rect x="2.5" y="0.5" width="3" height="3" fill="#6a6a6a"/><rect x="10.5" y="0.5" width="3" height="3" fill="#6a6a6a"/><path d="M2.5 7v6M10.5 7v6" stroke="#8a8a8a" stroke-width="0.8"/></svg>
<div class="t" style="left:636.50px;top:53.96px;font-size:8.2px;color:#333;font-weight:400;;transform:scaleX(0.8476)">Rechercher et</div>
<div class="t" style="left:636.50px;top:65.06px;font-size:8.2px;color:#333;font-weight:400;;transform:scaleX(0.9059)">sélectionner</div>
<svg style="left:677.50px;top:66.50px;" width="3" height="2" viewBox="0 0 3 2"><path d="M0 0h3L1.5 2z" fill="#444"/></svg>
<div class="a" style="left:3.30px;top:91.40px;width:61.50px;height:15.20px;border:1px solid #d4d4d4;background:#fff"></div>
<div class="t" style="left:7.20px;top:96.43px;font-size:8px;color:#222;font-weight:400;">A4</div>
<svg style="left:57.00px;top:97.50px;" width="4" height="3" viewBox="0 0 4 3"><path d="M0 0h4L2 2.5z" fill="#444"/></svg>
<div class="a" style="left:73.50px;top:96.20px;width:1.00px;height:1.00px;background:#999"></div>
<div class="a" style="left:73.50px;top:98.50px;width:1.00px;height:1.00px;background:#999"></div>
<div class="a" style="left:73.50px;top:100.80px;width:1.00px;height:1.00px;background:#999"></div>
<div class="a" style="left:83.20px;top:91.30px;width:66.30px;height:15.60px;border:1px solid #d4d4d4;background:#fff"></div>
<svg style="left:91.00px;top:96.30px;" width="7.5" height="6.5" viewBox="0 0 7.5 6.5"><path d="M0.5 0.5l6.3 5.5M6.8 0.5 0.5 6" stroke="#555" stroke-width="1"/></svg>
<svg style="left:112.50px;top:96.30px;" width="9" height="6.8" viewBox="0 0 9 6.8"><path d="M0.5 3.3 3 6l5.5-5.5" fill="none" stroke="#555" stroke-width="1.3"/></svg>
<div class="t" style="left:134.60px;top:94.86px;font-size:9.5px;color:#555;font-weight:400;font-style:italic;font-family:"Liberation Serif",serif;transform:scaleX(1.4391)">f</div>
<div class="t" style="left:138.20px;top:97.47px;font-size:7px;color:#555;font-weight:400;font-style:italic;font-family:"Liberation Serif",serif;transform:scaleX(1.2221)">x</div>
<div class="a" style="left:151.60px;top:91.30px;width:540.00px;height:15.80px;border:1px solid #d4d4d4;background:#fff"></div>
<div class="t" style="left:158.60px;top:96.43px;font-size:8px;color:#222;font-weight:700;;transform:scaleX(0.9686)">A</div>
<div class="a" style="left:0.00px;top:113.40px;width:690.00px;height:12.00px;background:#fff"></div>
<div class="a" style="left:17.00px;top:113.40px;width:125.30px;height:11.00px;background:#dedede"></div>
<svg style="left:7.00px;top:116.00px;" width="9" height="8" viewBox="0 0 9 8"><path d="M8.2 0.2V7.8H0.6z" fill="#dcdcdc"/></svg>
<div class="a" style="left:0.00px;top:125.30px;width:690.00px;height:1.00px;background:#d4d4d4"></div>
<div class="a" style="left:17.00px;top:124.80px;width:125.30px;height:1.50px;background:#217346"></div>
<div class="a" style="left:141.40px;top:113.40px;width:1.00px;height:11.90px;background:#e2e2e2"></div>
<div class="a" style="left:194.50px;top:113.40px;width:1.00px;height:11.90px;background:#e2e2e2"></div>
<div class="a" style="left:247.40px;top:113.40px;width:1.00px;height:11.90px;background:#e2e2e2"></div>
<div class="a" style="left:301.30px;top:113.40px;width:1.00px;height:11.90px;background:#e2e2e2"></div>
<div class="a" style="left:354.60px;top:113.40px;width:1.00px;height:11.90px;background:#e2e2e2"></div>
<div class="a" style="left:407.90px;top:113.40px;width:1.00px;height:11.90px;background:#e2e2e2"></div>
<div class="a" style="left:461.20px;top:113.40px;width:1.00px;height:11.90px;background:#e2e2e2"></div>
<div class="a" style="left:514.50px;top:113.40px;width:1.00px;height:11.90px;background:#e2e2e2"></div>
<div class="a" style="left:567.80px;top:113.40px;width:1.00px;height:11.90px;background:#e2e2e2"></div>
<div class="a" style="left:621.00px;top:113.40px;width:1.00px;height:11.90px;background:#e2e2e2"></div>
<div class="a" style="left:674.30px;top:113.40px;width:1.00px;height:11.90px;background:#e2e2e2"></div>
<div class="a" style="left:16.60px;top:113.40px;width:1.00px;height:285.00px;background:#d8d8d8"></div>
<div class="t" style="left:76.99px;top:116.01px;font-size:9.2px;color:#217346;font-weight:700;;transform:scaleX(0.8000)">A</div>
<div class="t" style="left:166.39px;top:116.01px;font-size:9.2px;color:#555;font-weight:400;;transform:scaleX(0.8000)">B</div>
<div class="t" style="left:219.19px;top:116.01px;font-size:9.2px;color:#555;font-weight:400;;transform:scaleX(0.8000)">C</div>
<div class="t" style="left:272.59px;top:116.01px;font-size:9.2px;color:#555;font-weight:400;;transform:scaleX(0.8000)">D</div>
<div class="t" style="left:326.39px;top:116.01px;font-size:9.2px;color:#555;font-weight:400;;transform:scaleX(0.8000)">E</div>
<div class="t" style="left:379.90px;top:116.01px;font-size:9.2px;color:#555;font-weight:400;;transform:scaleX(0.8000)">F</div>
<div class="t" style="left:432.59px;top:116.01px;font-size:9.2px;color:#555;font-weight:400;;transform:scaleX(0.8000)">G</div>
<div class="t" style="left:486.09px;top:116.01px;font-size:9.2px;color:#555;font-weight:400;;transform:scaleX(0.8000)">H</div>
<div class="t" style="left:541.02px;top:116.01px;font-size:9.2px;color:#555;font-weight:400;;transform:scaleX(0.8000)">I</div>
<div class="t" style="left:593.46px;top:116.01px;font-size:9.2px;color:#555;font-weight:400;;transform:scaleX(0.8000)">J</div>
<div class="t" style="left:646.09px;top:116.01px;font-size:9.2px;color:#555;font-weight:400;;transform:scaleX(0.8000)">K</div>
<div class="t" style="left:699.80px;top:116.01px;font-size:9.2px;color:#555;font-weight:400;;transform:scaleX(0.8000)">L</div>
<div class="a" style="left:302.20px;top:125.80px;width:388.00px;height:1.00px;background:#dadada"></div>
<div class="a" style="left:0.00px;top:125.80px;width:17.00px;height:1.00px;background:#e4e4e4"></div>
<div class="a" style="left:302.20px;top:148.80px;width:388.00px;height:1.00px;background:#dadada"></div>
<div class="a" style="left:0.00px;top:148.80px;width:17.00px;height:1.00px;background:#e4e4e4"></div>
<div class="a" style="left:302.20px;top:163.35px;width:388.00px;height:1.00px;background:#dadada"></div>
<div class="a" style="left:0.00px;top:163.35px;width:17.00px;height:1.00px;background:#e4e4e4"></div>
<div class="a" style="left:302.20px;top:177.90px;width:388.00px;height:1.00px;background:#dadada"></div>
<div class="a" style="left:0.00px;top:177.90px;width:17.00px;height:1.00px;background:#e4e4e4"></div>
<div class="a" style="left:302.20px;top:192.45px;width:388.00px;height:1.00px;background:#dadada"></div>
<div class="a" style="left:0.00px;top:192.45px;width:17.00px;height:1.00px;background:#e4e4e4"></div>
<div class="a" style="left:302.20px;top:207.00px;width:388.00px;height:1.00px;background:#dadada"></div>
<div class="a" style="left:0.00px;top:207.00px;width:17.00px;height:1.00px;background:#e4e4e4"></div>
<div class="a" style="left:302.20px;top:221.55px;width:388.00px;height:1.00px;background:#dadada"></div>
<div class="a" style="left:0.00px;top:221.55px;width:17.00px;height:1.00px;background:#e4e4e4"></div>
<div class="a" style="left:302.20px;top:236.10px;width:388.00px;height:1.00px;background:#dadada"></div>
<div class="a" style="left:0.00px;top:236.10px;width:17.00px;height:1.00px;background:#e4e4e4"></div>
<div class="a" style="left:302.20px;top:250.65px;width:388.00px;height:1.00px;background:#dadada"></div>
<div class="a" style="left:0.00px;top:250.65px;width:17.00px;height:1.00px;background:#e4e4e4"></div>
<div class="a" style="left:302.20px;top:265.20px;width:388.00px;height:1.00px;background:#dadada"></div>
<div class="a" style="left:0.00px;top:265.20px;width:17.00px;height:1.00px;background:#e4e4e4"></div>
<div class="a" style="left:302.20px;top:279.75px;width:388.00px;height:1.00px;background:#dadada"></div>
<div class="a" style="left:0.00px;top:279.75px;width:17.00px;height:1.00px;background:#e4e4e4"></div>
<div class="a" style="left:302.20px;top:294.30px;width:388.00px;height:1.00px;background:#dadada"></div>
<div class="a" style="left:0.00px;top:294.30px;width:17.00px;height:1.00px;background:#e4e4e4"></div>
<div class="a" style="left:302.20px;top:308.85px;width:388.00px;height:1.00px;background:#dadada"></div>
<div class="a" style="left:0.00px;top:308.85px;width:17.00px;height:1.00px;background:#e4e4e4"></div>
<div class="a" style="left:302.20px;top:323.40px;width:388.00px;height:1.00px;background:#dadada"></div>
<div class="a" style="left:0.00px;top:323.40px;width:17.00px;height:1.00px;background:#e4e4e4"></div>
<div class="a" style="left:302.20px;top:337.95px;width:388.00px;height:1.00px;background:#dadada"></div>
<div class="a" style="left:0.00px;top:337.95px;width:17.00px;height:1.00px;background:#e4e4e4"></div>
<div class="a" style="left:302.20px;top:352.50px;width:388.00px;height:1.00px;background:#dadada"></div>
<div class="a" style="left:0.00px;top:352.50px;width:17.00px;height:1.00px;background:#e4e4e4"></div>
<div class="a" style="left:302.20px;top:367.05px;width:388.00px;height:1.00px;background:#dadada"></div>
<div class="a" style="left:0.00px;top:367.05px;width:17.00px;height:1.00px;background:#e4e4e4"></div>
<div class="a" style="left:302.20px;top:381.60px;width:388.00px;height:1.00px;background:#dadada"></div>
<div class="a" style="left:0.00px;top:381.60px;width:17.00px;height:1.00px;background:#e4e4e4"></div>
<div class="a" style="left:302.20px;top:396.15px;width:388.00px;height:1.00px;background:#dadada"></div>
<div class="a" style="left:0.00px;top:396.15px;width:17.00px;height:1.00px;background:#e4e4e4"></div>
<div class="a" style="left:354.60px;top:126.00px;width:1.00px;height:272.00px;background:#dadada"></div>
<div class="a" style="left:407.90px;top:126.00px;width:1.00px;height:272.00px;background:#dadada"></div>
<div class="a" style="left:461.20px;top:126.00px;width:1.00px;height:272.00px;background:#dadada"></div>
<div class="a" style="left:514.50px;top:126.00px;width:1.00px;height:272.00px;background:#dadada"></div>
<div class="a" style="left:567.80px;top:126.00px;width:1.00px;height:272.00px;background:#dadada"></div>
<div class="a" style="left:621.00px;top:126.00px;width:1.00px;height:272.00px;background:#dadada"></div>
<div class="a" style="left:674.30px;top:126.00px;width:1.00px;height:272.00px;background:#dadada"></div>
<div class="a" style="left:0.00px;top:148.90px;width:16.60px;height:14.55px;background:#e1e1e1"></div>
<div class="t" style="left:6.32px;top:138.53px;font-size:9.3px;color:#555;font-weight:400;;transform:scaleX(0.9200)">3</div>
<div class="t" style="left:6.32px;top:153.08px;font-size:9.3px;color:#217346;font-weight:700;;transform:scaleX(0.9200)">4</div>
<div class="t" style="left:6.32px;top:167.63px;font-size:9.3px;color:#555;font-weight:400;;transform:scaleX(0.9200)">5</div>
<div class="t" style="left:6.32px;top:182.18px;font-size:9.3px;color:#555;font-weight:400;;transform:scaleX(0.9200)">6</div>
<div class="t" style="left:6.32px;top:196.73px;font-size:9.3px;color:#555;font-weight:400;;transform:scaleX(0.9200)">7</div>
<div class="t" style="left:6.32px;top:211.28px;font-size:9.3px;color:#555;font-weight:400;;transform:scaleX(0.9200)">8</div>
<div class="t" style="left:6.32px;top:225.83px;font-size:9.3px;color:#555;font-weight:400;;transform:scaleX(0.9200)">9</div>
<div class="t" style="left:3.94px;top:240.38px;font-size:9.3px;color:#555;font-weight:400;;transform:scaleX(0.9200)">10</div>
<div class="t" style="left:4.26px;top:254.93px;font-size:9.3px;color:#555;font-weight:400;;transform:scaleX(0.9200)">11</div>
<div class="t" style="left:3.94px;top:269.48px;font-size:9.3px;color:#555;font-weight:400;;transform:scaleX(0.9200)">12</div>
<div class="t" style="left:3.94px;top:284.03px;font-size:9.3px;color:#555;font-weight:400;;transform:scaleX(0.9200)">13</div>
<div class="t" style="left:3.94px;top:298.58px;font-size:9.3px;color:#555;font-weight:400;;transform:scaleX(0.9200)">14</div>
<div class="t" style="left:3.94px;top:313.13px;font-size:9.3px;color:#555;font-weight:400;;transform:scaleX(0.9200)">15</div>
<div class="t" style="left:3.94px;top:327.68px;font-size:9.3px;color:#555;font-weight:400;;transform:scaleX(0.9200)">16</div>
<div class="t" style="left:3.94px;top:342.23px;font-size:9.3px;color:#555;font-weight:400;;transform:scaleX(0.9200)">17</div>
<div class="t" style="left:3.94px;top:356.78px;font-size:9.3px;color:#555;font-weight:400;;transform:scaleX(0.9200)">18</div>
<div class="t" style="left:3.94px;top:371.33px;font-size:9.3px;color:#555;font-weight:400;;transform:scaleX(0.9200)">19</div>
<div class="t" style="left:3.94px;top:385.88px;font-size:9.3px;color:#555;font-weight:400;;transform:scaleX(0.9200)">20</div>
<div class="a" style="left:17.00px;top:126.30px;width:285.20px;height:23.00px;background:#173d5e"></div>
<div class="a" style="left:17.00px;top:149.30px;width:285.20px;height:14.65px;background:#d5ebe5"></div>
<div class="a" style="left:17.00px;top:163.85px;width:285.20px;height:14.65px;background:#a9d3bb"></div>
<div class="a" style="left:17.00px;top:178.40px;width:285.20px;height:14.65px;background:#d5ebe5"></div>
<div class="a" style="left:17.00px;top:192.95px;width:285.20px;height:14.65px;background:#a9d3bb"></div>
<div class="a" style="left:17.00px;top:207.50px;width:285.20px;height:14.65px;background:#d5ebe5"></div>
<div class="a" style="left:17.00px;top:222.05px;width:285.20px;height:14.65px;background:#a9d3bb"></div>
<div class="a" style="left:17.00px;top:236.60px;width:285.20px;height:14.65px;background:#d5ebe5"></div>
<div class="a" style="left:17.00px;top:251.15px;width:285.20px;height:14.65px;background:#a9d3bb"></div>
<div class="a" style="left:17.00px;top:265.70px;width:285.20px;height:14.65px;background:#d5ebe5"></div>
<div class="a" style="left:17.00px;top:280.25px;width:285.20px;height:14.65px;background:#a9d3bb"></div>
<div class="a" style="left:17.00px;top:294.80px;width:285.20px;height:14.65px;background:#d5ebe5"></div>
<div class="a" style="left:17.00px;top:309.35px;width:285.20px;height:14.65px;background:#a9d3bb"></div>
<div class="a" style="left:17.00px;top:323.90px;width:285.20px;height:14.65px;background:#d5ebe5"></div>
<div class="a" style="left:17.00px;top:338.45px;width:285.20px;height:14.65px;background:#a9d3bb"></div>
<div class="a" style="left:17.00px;top:353.00px;width:285.20px;height:14.65px;background:#d5ebe5"></div>
<div class="a" style="left:17.00px;top:367.55px;width:285.20px;height:14.65px;background:#a9d3bb"></div>
<div class="a" style="left:17.00px;top:382.10px;width:285.20px;height:14.65px;background:#d5ebe5"></div>
<div class="t" style="left:157.56px;top:167.83px;font-size:9.0px;color:#1b3a5e;font-weight:400;;transform:scaleX(0.9000)">3 563 112</div>
<div class="t" style="left:221.42px;top:167.83px;font-size:9.0px;color:#1b3a5e;font-weight:400;;transform:scaleX(0.9000)">28 748</div>
<div class="t" style="left:274.82px;top:167.83px;font-size:9.0px;color:#1b3a5e;font-weight:400;;transform:scaleX(0.9000)">123,94</div>
<div class="t" style="left:20.00px;top:182.38px;font-size:9.0px;color:#1b3a5e;font-weight:400;-webkit-text-stroke:0.35px #1b3a5e;transform:scaleX(0.9000)">Andorre</div>
<div class="t" style="left:168.22px;top:182.38px;font-size:9.0px;color:#1b3a5e;font-weight:400;;transform:scaleX(0.9000)">70 549</div>
<div class="t" style="left:20.00px;top:196.93px;font-size:9.0px;color:#1b3a5e;font-weight:400;-webkit-text-stroke:0.35px #1b3a5e;transform:scaleX(0.9000)">Autriche</div>
<div class="t" style="left:156.96px;top:196.93px;font-size:9.0px;color:#1b3a5e;font-weight:400;;transform:scaleX(0.9000)">8 184 691</div>
<div class="t" style="left:221.42px;top:196.93px;font-size:9.0px;color:#1b3a5e;font-weight:400;;transform:scaleX(0.9000)">83 870</div>
<div class="t" style="left:279.32px;top:196.93px;font-size:9.0px;color:#1b3a5e;font-weight:400;;transform:scaleX(0.9000)">97,59</div>
<div class="t" style="left:20.00px;top:211.48px;font-size:9.0px;color:#1b3a5e;font-weight:400;-webkit-text-stroke:0.35px #1b3a5e;transform:scaleX(0.9000)">Biélorussie</div>
<div class="t" style="left:152.46px;top:211.48px;font-size:9.0px;color:#1b3a5e;font-weight:400;;transform:scaleX(0.9000)">10 300 483</div>
<div class="t" style="left:216.91px;top:211.48px;font-size:9.0px;color:#1b3a5e;font-weight:400;;transform:scaleX(0.9000)">207 600</div>
<div class="t" style="left:279.32px;top:211.48px;font-size:9.0px;color:#1b3a5e;font-weight:400;;transform:scaleX(0.9000)">49,62</div>
<div class="t" style="left:20.00px;top:226.03px;font-size:9.0px;color:#1b3a5e;font-weight:400;-webkit-text-stroke:0.35px #1b3a5e;transform:scaleX(0.9000)">Belgique</div>
<div class="t" style="left:152.46px;top:226.03px;font-size:9.0px;color:#1b3a5e;font-weight:400;;transform:scaleX(0.9000)">10 364 388</div>
<div class="t" style="left:221.42px;top:226.03px;font-size:9.0px;color:#1b3a5e;font-weight:400;;transform:scaleX(0.9000)">30 528</div>
<div class="t" style="left:274.82px;top:226.03px;font-size:9.0px;color:#1b3a5e;font-weight:400;;transform:scaleX(0.9000)">339,50</div>
<div class="t" style="left:20.00px;top:240.58px;font-size:9.0px;color:#1b3a5e;font-weight:400;-webkit-text-stroke:0.35px #1b3a5e;transform:scaleX(0.9000)">Bosnie-Herzégovine</div>
<div class="t" style="left:156.96px;top:240.58px;font-size:9.0px;color:#1b3a5e;font-weight:400;;transform:scaleX(0.9000)">4 025 476</div>
<div class="t" style="left:221.42px;top:240.58px;font-size:9.0px;color:#1b3a5e;font-weight:400;;transform:scaleX(0.9000)">51 129</div>
<div class="t" style="left:279.32px;top:240.58px;font-size:9.0px;color:#1b3a5e;font-weight:400;;transform:scaleX(0.9000)">78,73</div>
<div class="t" style="left:20.00px;top:255.13px;font-size:9.0px;color:#1b3a5e;font-weight:400;-webkit-text-stroke:0.35px #1b3a5e;transform:scaleX(0.9000)">Bulgarie</div>
<div class="t" style="left:156.96px;top:255.13px;font-size:9.0px;color:#1b3a5e;font-weight:400;;transform:scaleX(0.9000)">7 450 349</div>
<div class="t" style="left:217.51px;top:255.13px;font-size:9.0px;color:#1b3a5e;font-weight:400;;transform:scaleX(0.9000)">110 910</div>
<div class="t" style="left:279.32px;top:255.13px;font-size:9.0px;color:#1b3a5e;font-weight:400;;transform:scaleX(0.9000)">67,17</div>
<div class="t" style="left:163.71px;top:269.68px;font-size:9.0px;color:#1b3a5e;font-weight:400;;transform:scaleX(0.9000)">780 133</div>
<div class="t" style="left:225.92px;top:269.68px;font-size:9.0px;color:#1b3a5e;font-weight:400;;transform:scaleX(0.9000)">9 250</div>
<div class="t" style="left:279.32px;top:269.68px;font-size:9.0px;color:#1b3a5e;font-weight:400;;transform:scaleX(0.9000)">84,34</div>
<div class="t" style="left:20.00px;top:284.23px;font-size:9.0px;color:#1b3a5e;font-weight:400;-webkit-text-stroke:0.35px #1b3a5e;transform:scaleX(0.9000)">Croatie</div>
<div class="t" style="left:156.96px;top:284.23px;font-size:9.0px;color:#1b3a5e;font-weight:400;;transform:scaleX(0.9000)">4 437 460</div>
<div class="t" style="left:221.42px;top:284.23px;font-size:9.0px;color:#1b3a5e;font-weight:400;;transform:scaleX(0.9000)">56 542</div>
<div class="t" style="left:279.32px;top:284.23px;font-size:9.0px;color:#1b3a5e;font-weight:400;;transform:scaleX(0.9000)">78,48</div>
<div class="t" style="left:20.00px;top:298.78px;font-size:9.0px;color:#1b3a5e;font-weight:400;-webkit-text-stroke:0.35px #1b3a5e;transform:scaleX(0.9000)">Danemark</div>
<div class="t" style="left:156.96px;top:298.78px;font-size:9.0px;color:#1b3a5e;font-weight:400;;transform:scaleX(0.9000)">5 535 672</div>
<div class="t" style="left:210.16px;top:298.78px;font-size:9.0px;color:#1b3a5e;font-weight:400;;transform:scaleX(0.9000)">2 210 579</div>
<div class="t" style="left:283.82px;top:298.78px;font-size:9.0px;color:#1b3a5e;font-weight:400;;transform:scaleX(0.9000)">2,50</div>
<div class="t" style="left:20.00px;top:313.33px;font-size:9.0px;color:#1b3a5e;font-weight:400;-webkit-text-stroke:0.35px #1b3a5e;transform:scaleX(0.9000)">Espagne</div>
<div class="t" style="left:152.46px;top:313.33px;font-size:9.0px;color:#1b3a5e;font-weight:400;;transform:scaleX(0.9000)">43 197 684</div>
<div class="t" style="left:216.91px;top:313.33px;font-size:9.0px;color:#1b3a5e;font-weight:400;;transform:scaleX(0.9000)">504 782</div>
<div class="t" style="left:279.32px;top:313.33px;font-size:9.0px;color:#1b3a5e;font-weight:400;;transform:scaleX(0.9000)">85,58</div>
<div class="t" style="left:20.00px;top:327.88px;font-size:9.0px;color:#1b3a5e;font-weight:400;-webkit-text-stroke:0.35px #1b3a5e;transform:scaleX(0.9000)">Estonie</div>
<div class="t" style="left:156.96px;top:327.88px;font-size:9.0px;color:#1b3a5e;font-weight:400;;transform:scaleX(0.9000)">1 332 893</div>
<div class="t" style="left:221.42px;top:327.88px;font-size:9.0px;color:#1b3a5e;font-weight:400;;transform:scaleX(0.9000)">45 226</div>
<div class="t" style="left:279.32px;top:327.88px;font-size:9.0px;color:#1b3a5e;font-weight:400;;transform:scaleX(0.9000)">29,47</div>
<div class="t" style="left:20.00px;top:342.43px;font-size:9.0px;color:#1b3a5e;font-weight:400;-webkit-text-stroke:0.35px #1b3a5e;transform:scaleX(0.9000)">Finlande</div>
<div class="t" style="left:156.96px;top:342.43px;font-size:9.0px;color:#1b3a5e;font-weight:400;;transform:scaleX(0.9000)">5 223 442</div>
<div class="t" style="left:216.91px;top:342.43px;font-size:9.0px;color:#1b3a5e;font-weight:400;;transform:scaleX(0.9000)">338 145</div>
<div class="t" style="left:279.32px;top:342.43px;font-size:9.0px;color:#1b3a5e;font-weight:400;;transform:scaleX(0.9000)">15,45</div>
<div class="t" style="left:20.00px;top:356.98px;font-size:9.0px;color:#1b3a5e;font-weight:400;-webkit-text-stroke:0.35px #1b3a5e;transform:scaleX(0.9000)">France</div>
<div class="t" style="left:152.46px;top:356.98px;font-size:9.0px;color:#1b3a5e;font-weight:400;;transform:scaleX(0.9000)">64 095 716</div>
<div class="t" style="left:216.91px;top:356.98px;font-size:9.0px;color:#1b3a5e;font-weight:400;;transform:scaleX(0.9000)">667 544</div>
<div class="t" style="left:279.32px;top:356.98px;font-size:9.0px;color:#1b3a5e;font-weight:400;;transform:scaleX(0.9000)">96,02</div>
<div class="t" style="left:20.00px;top:371.53px;font-size:9.0px;color:#1b3a5e;font-weight:400;-webkit-text-stroke:0.35px #1b3a5e;transform:scaleX(0.9000)">Grèce</div>
<div class="t" style="left:152.46px;top:371.53px;font-size:9.0px;color:#1b3a5e;font-weight:400;;transform:scaleX(0.9000)">10 668 354</div>
<div class="t" style="left:216.91px;top:371.53px;font-size:9.0px;color:#1b3a5e;font-weight:400;;transform:scaleX(0.9000)">131 940</div>
<div class="t" style="left:279.32px;top:371.53px;font-size:9.0px;color:#1b3a5e;font-weight:400;;transform:scaleX(0.9000)">80,86</div>
<div class="t" style="left:20.00px;top:386.08px;font-size:9.0px;color:#1b3a5e;font-weight:400;-webkit-text-stroke:0.35px #1b3a5e;transform:scaleX(0.9000)">Hongrie</div>
<div class="t" style="left:152.46px;top:386.08px;font-size:9.0px;color:#1b3a5e;font-weight:400;;transform:scaleX(0.9000)">10 006 835</div>
<div class="t" style="left:221.42px;top:386.08px;font-size:9.0px;color:#1b3a5e;font-weight:400;;transform:scaleX(0.9000)">93 030</div>
<div class="t" style="left:274.82px;top:386.08px;font-size:9.0px;color:#1b3a5e;font-weight:400;;transform:scaleX(0.9000)">107,57</div>
<div class="t" style="left:152.46px;top:153.28px;font-size:9.0px;color:#1b3a5e;font-weight:400;;transform:scaleX(0.9000)">82 431 390</div>
<div class="t" style="left:216.91px;top:153.28px;font-size:9.0px;color:#1b3a5e;font-weight:400;;transform:scaleX(0.9000)">357 021</div>
<div class="t" style="left:274.82px;top:153.28px;font-size:9.0px;color:#1b3a5e;font-weight:400;;transform:scaleX(0.9000)">230,89</div>
<div class="t" style="left:20.10px;top:134.49px;font-size:8.4px;color:#efe6cb;font-weight:700;;transform:scaleX(1.1011)">Pays (ou territoire)</div>
<div class="t" style="left:145.30px;top:128.79px;font-size:8.4px;color:#efe6cb;font-weight:700;;transform:scaleX(1.0748)">Population</div>
<div class="t" style="left:156.20px;top:140.49px;font-size:8.4px;color:#efe6cb;font-weight:700;;transform:scaleX(1.0966)">(hab.)</div>
<div class="t" style="left:202.00px;top:128.79px;font-size:8.4px;color:#efe6cb;font-weight:700;;transform:scaleX(0.9877)">Superficie</div>
<div class="t" style="left:209.70px;top:140.49px;font-size:8.4px;color:#efe6cb;font-weight:700;;transform:scaleX(1.2204)">(km²)</div>
<div class="t" style="left:259.90px;top:128.79px;font-size:8.4px;color:#efe6cb;font-weight:700;;transform:scaleX(1.0672)">Densité</div>
<div class="t" style="left:252.30px;top:140.49px;font-size:8.4px;color:#efe6cb;font-weight:700;;transform:scaleX(1.1620)">(hab./km²)</div>
<div class="a" style="left:16.50px;top:148.40px;width:126.80px;height:16.20px;border:2px solid #217346"></div>
<div class="a" style="left:141.40px;top:162.80px;width:3.20px;height:3.20px;background:#217346"></div>
<div class="t" style="left:20.00px;top:152.81px;font-size:9.2px;color:#1b3a5e;font-weight:700;;transform:scaleX(0.9035)">A</div>
<div class="a" style="left:26.60px;top:151.60px;width:0.90px;height:9.80px;background:#111"></div>
<svg style="left:78.50px;top:152.50px;" width="5" height="10" viewBox="0 0 5 10"><path d="M0.5 0.5h4M0.5 9.5h4M2.5 0.5v9" stroke="#555" stroke-width="0.8" fill="none"/></svg>
<div class="a" style="left:17.00px;top:396.60px;width:285.20px;height:1.50px;background:#a9d3bb"></div>
<div class="a" style="left:0.00px;top:398.40px;width:690.00px;height:32.30px;background:#4a4a4a"></div>
<div class="a" style="left:0.00px;top:397.80px;width:690.00px;height:1.00px;background:#1a1a1a"></div>
<div class="a" style="left:15.10px;top:404.85px;width:26px;height:25.5px;border-radius:50%;background:#1f1f1f"></div>
<svg style="left:25.00px;top:412.00px;" width="10" height="11.2" viewBox="0 0 10 11.2"><path d="M0 0 9.3 5.6 0 11.2z" fill="#fff"/></svg>
<div class="a" style="left:103.00px;top:415.00px;width:441.00px;height:7.00px;background:linear-gradient(to bottom,#000 0,#050505 60%,#1c1c1c 100%)"></div>
<div class="a" style="left:55.30px;top:414.20px;width:43.00px;height:8.60px;background:#1e1e1e;border-radius:1px"></div>
<div class="a" style="left:56.30px;top:415.00px;width:41.00px;height:7.00px;background:linear-gradient(to bottom,#c8c8c8 0,#a5a5a5 35%,#7a7a7a 70%,#5c5c5c 100%)"></div>
<div class="a" style="left:96.40px;top:412.30px;width:7.00px;height:13.20px;background:#262626;border-radius:1.5px"></div>
<div class="a" style="left:97.00px;top:413.00px;width:5.90px;height:11.90px;background:linear-gradient(to bottom,#fff,#f0f0f0 80%,#ddd);border-radius:1px"></div>
<div class="t" style="left:554.60px;top:414.72px;font-size:8.6px;color:#e8e8e8;font-weight:400;;transform:scaleX(0.8545)">0:17</div>
<div class="t" style="left:573.50px;top:414.72px;font-size:8.6px;color:#e8e8e8;font-weight:400;;transform:scaleX(1.1712)">/</div>
<div class="t" style="left:579.40px;top:414.72px;font-size:8.6px;color:#e8e8e8;font-weight:400;;transform:scaleX(0.8725)">3:13</div>
<div class="a" style="left:624.10px;top:405.40px;width:25.6px;height:25px;border-radius:50%;background:#1f1f1f"></div>
<svg style="left:628.90px;top:411.40px;" width="17" height="11.6" viewBox="0 0 17 11.6"><path d="M0 3.4h3.2L8.6 0v11.6L3.2 8.2H0z" fill="#fff"/><path d="M10.6 3.2a3.4 3.4 0 0 1 0 5.2M13.2 1a6.5 6.5 0 0 1 0 9.6" fill="none" stroke="#fff" stroke-width="1.3"/></svg>
<div class="a" style="left:660.30px;top:405.40px;width:25.8px;height:25px;border-radius:50%;background:#1f1f1f"></div>
<svg style="left:666.30px;top:413.20px;" width="15" height="8" viewBox="0 0 15 8"><rect x="0" y="0" width="15" height="8" fill="#fff"/><rect x="1.3" y="2.6" width="12.3" height="1.1" fill="#222"/><rect x="4.5" y="5" width="6" height="0.7" fill="#999"/></svg>
<div class="a" style="left:263.70px;top:374.20px;width:248.10px;height:17.40px;background:rgba(40,40,40,0.7)"></div>
<div class="t" style="left:267.30px;top:379.69px;font-size:8.4px;color:#f0f0f0;font-weight:400;;transform:scaleX(1.0667)">Dès le premier caractère saisi, la barre de formule est active.</div>

</div>

</body></html>
